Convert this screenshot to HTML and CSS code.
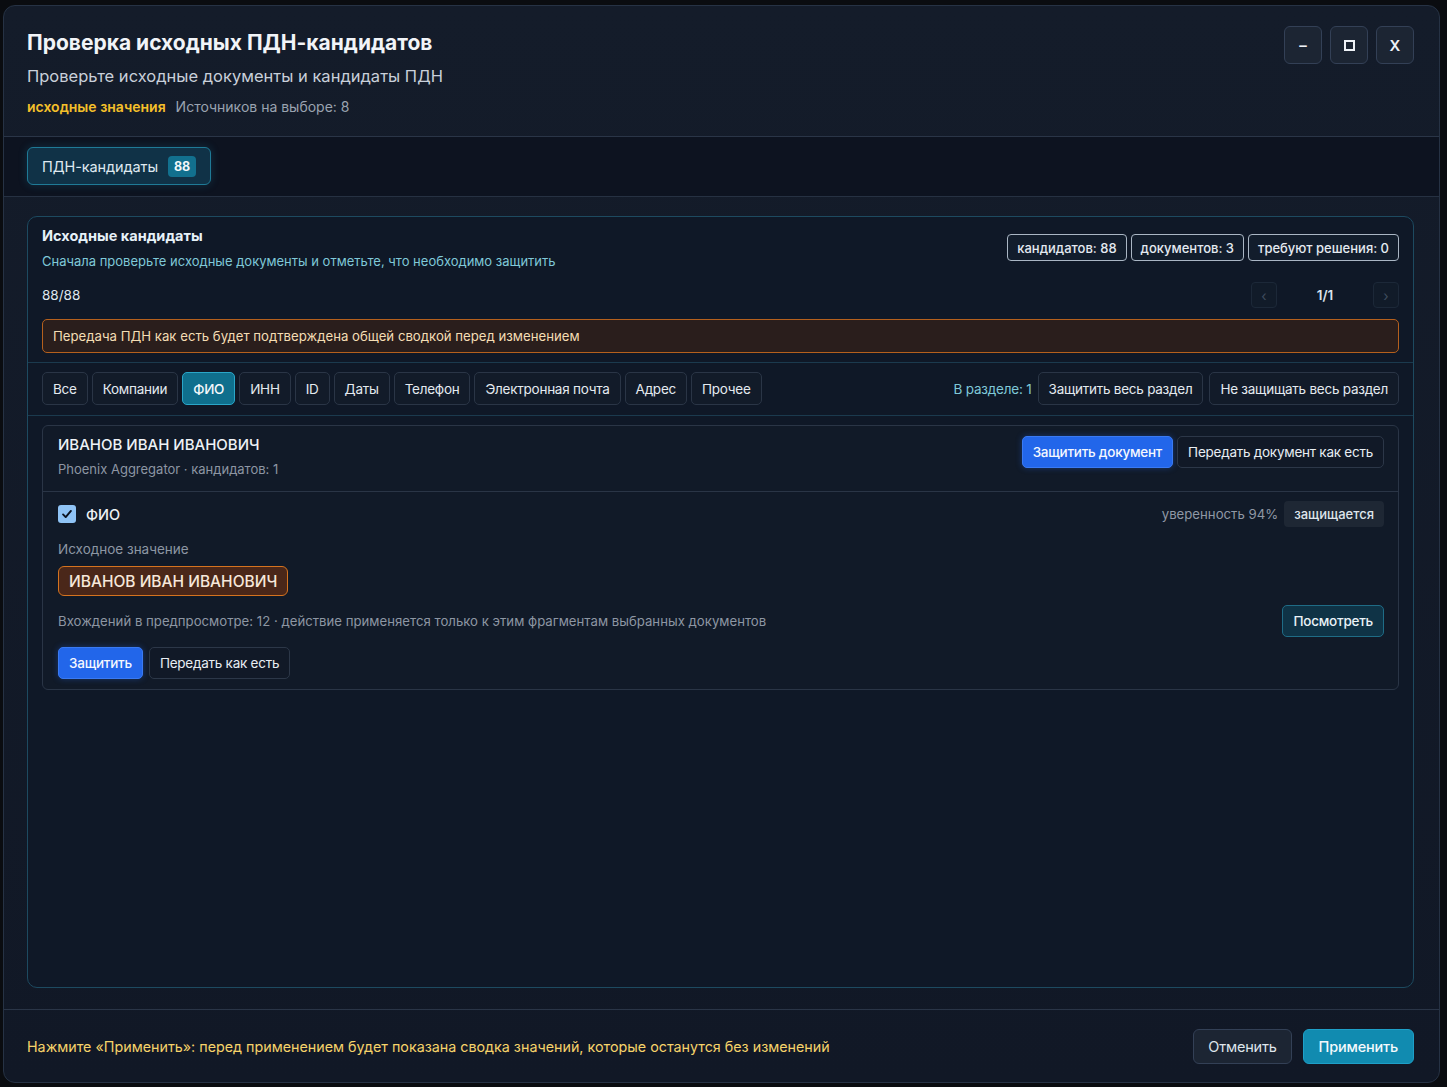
FILE: index.html
```html
<!DOCTYPE html>
<html lang="ru">
<head>
<meta charset="utf-8">
<title>Проверка исходных ПДН-кандидатов</title>
<link rel="stylesheet" href="styles.css">
</head>
<body>
<div class="modal">
  <header class="head">
    <div class="head-text">
      <h1 class="title">Проверка исходных ПДН-кандидатов</h1>
      <p class="subtitle">Проверьте исходные документы и кандидаты ПДН</p>
      <p class="meta"><span class="meta-accent">исходные значения</span><span class="meta-muted">Источников на выборе: 8</span></p>
    </div>
    <div class="win-ctrls">
      <button class="win-btn">–</button>
      <button class="win-btn"><span class="sq"></span></button>
      <button class="win-btn">X</button>
    </div>
  </header>

  <nav class="strip">
    <button class="strip-tab">ПДН-кандидаты <span class="count">88</span></button>
  </nav>

  <main class="body">
    <section class="panel">
      <div class="panel-top">
        <div class="panel-head">
          <div>
            <h2 class="panel-title">Исходные кандидаты</h2>
            <p class="panel-sub">Сначала проверьте исходные документы и отметьте, что необходимо защитить</p>
          </div>
          <div class="chips">
            <span class="chip">кандидатов: 88</span>
            <span class="chip">документов: 3</span>
            <span class="chip">требуют решения: 0</span>
          </div>
        </div>
        <div class="pager-row">
          <span class="ratio">88/88</span>
          <div class="pager">
            <button class="pg-btn">‹</button>
            <span class="pg-num">1/1</span>
            <button class="pg-btn">›</button>
          </div>
        </div>
        <div class="warn">Передача ПДН как есть будет подтверждена общей сводкой перед изменением</div>
      </div>

      <div class="filters">
        <div class="filter-tabs">
          <button class="ftab">Все</button>
          <button class="ftab">Компании</button>
          <button class="ftab active">ФИО</button>
          <button class="ftab">ИНН</button>
          <button class="ftab">ID</button>
          <button class="ftab">Даты</button>
          <button class="ftab">Телефон</button>
          <button class="ftab">Электронная почта</button>
          <button class="ftab">Адрес</button>
          <button class="ftab">Прочее</button>
        </div>
        <div class="filter-actions">
          <span class="in-section">В разделе: 1</span>
          <button class="ftab">Защитить весь раздел</button>
          <button class="ftab">Не защищать весь раздел</button>
        </div>
      </div>

      <div class="list">
        <article class="doc">
          <div class="doc-head">
            <div>
              <div class="doc-name">ИВАНОВ ИВАН ИВАНОВИЧ</div>
              <div class="doc-sub">Phoenix Aggregator · кандидатов: 1</div>
            </div>
            <div class="doc-actions">
              <button class="btn btn-blue">Защитить документ</button>
              <button class="btn btn-dark">Передать документ как есть</button>
            </div>
          </div>
          <div class="cand">
            <div class="cand-top">
              <label class="cand-label"><span class="check"><svg viewBox="0 0 16 16" width="14" height="14"><path d="M3.5 8.5l3 3 6-7" fill="none" stroke="#0b1220" stroke-width="2.2" stroke-linecap="round" stroke-linejoin="round"/></svg></span>ФИО</label>
              <div class="cand-status">
                <span class="conf">уверенность 94%</span>
                <span class="state">защищается</span>
              </div>
            </div>
            <div class="field-label">Исходное значение</div>
            <div class="value-pill">ИВАНОВ ИВАН ИВАНОВИЧ</div>
            <div class="occ-row">
              <span class="occ">Вхождений в предпросмотре: 12 · действие применяется только к этим фрагментам выбранных документов</span>
              <button class="btn btn-teal">Посмотреть</button>
            </div>
            <div class="cand-actions">
              <button class="btn btn-blue">Защитить</button>
              <button class="btn btn-dark">Передать как есть</button>
            </div>
          </div>
        </article>
      </div>
    </section>
  </main>

  <footer class="foot">
    <p class="foot-note">Нажмите «Применить»: перед применением будет показана сводка значений, которые останутся без изменений</p>
    <div class="foot-actions">
      <button class="fbtn fbtn-cancel">Отменить</button>
      <button class="fbtn fbtn-apply">Применить</button>
    </div>
  </footer>
</div>
</body>
</html>
```

FILE: styles.css
```css
* { box-sizing: border-box; }
html, body { height: 100%; }
body {
  margin: 0;
  background: #0a0c10;
  font-family: Inter, "Noto Sans", "Liberation Sans", sans-serif;
  color: #e6ebf2;
}
button { font-family: inherit; cursor: pointer; }
p, h1, h2 { margin: 0; }

.modal {
  margin: 5px 7px 4px 3px;
  height: 1078px;
  border: 1px solid #263244;
  border-radius: 12px;
  background: linear-gradient(180deg, #141c2a 0%, #111826 100%);
  display: flex;
  flex-direction: column;
  overflow: hidden;
}

/* header */
.head {
  display: flex;
  justify-content: space-between;
  align-items: flex-start;
  padding: 21px 25px 0 23px;
  height: 131px;
  border-bottom: 1px solid #2a3547;
}
.title { font-size: 21px; font-weight: 700; color: #f1f4f8; letter-spacing: 0; line-height: 32px; }
.subtitle { margin-top: 5px; font-size: 16.5px; color: #c9d0da; line-height: 24px; }
.meta { margin-top: 10px; font-size: 14px; line-height: 18px; display: flex; gap: 10px; }
.meta-accent { color: #f5c02a; font-weight: 600; }
.meta-muted { color: #9aa3b0; }
.win-ctrls { display: flex; gap: 8px; margin-top: -1px; }
.win-btn {
  width: 38px; height: 38px;
  border-radius: 6px;
  border: 1px solid #334056;
  background: #1c2533;
  color: #eef2f7;
  font-size: 15px;
  font-weight: 600;
  display: flex; align-items: center; justify-content: center;
  padding: 0;
}
.sq { width: 11px; height: 11px; border: 2px solid #eef2f7; display: block; }

/* strip */
.strip {
  height: 60px;
  background: #0d1320;
  border-bottom: 1px solid #263142;
  padding: 10px 24px 11px 23px;
  display: flex;
  align-items: center;
}
.strip-tab {
  height: 38px;
  padding: 0 14px;
  border-radius: 6px;
  border: 1px solid #1f7a96;
  background: #103247;
  color: #dfe9f0;
  font-size: 14.5px;
  letter-spacing: -0.1px;
  display: flex; align-items: center; gap: 10px;
  box-shadow: 0 0 8px rgba(30, 140, 180, 0.25);
}
.count {
  background: #12708e;
  color: #f2f7fa;
  font-size: 12.5px;
  font-weight: 700;
  border-radius: 4px;
  padding: 3px 6px;
}

/* body */
.body { flex: 1; padding: 19px 25px 21px 23px; display: flex; }
.panel {
  flex: 1;
  border: 1px solid #1d4a60;
  border-radius: 10px;
  background: #0f1827;
  display: flex;
  flex-direction: column;
}
.panel-top { padding: 10px 14px 9px 14px; border-bottom: 1px solid #1b3a4e; }
.panel-head { display: flex; justify-content: space-between; align-items: flex-start; }
.panel-title { font-size: 14.5px; font-weight: 700; color: #e6f1f8; line-height: 18px; }
.panel-sub { margin-top: 8px; font-size: 13px; color: #7fc8d8; line-height: 16px; }
.chips { display: flex; gap: 4px; margin-top: 7px; }
.chip {
  height: 27px;
  padding: 0 9px;
  border: 1px solid #aab6c4;
  border-radius: 4px;
  font-size: 13px;
  font-weight: 500;
  color: #e4eaf1;
  display: flex; align-items: center;
  background: #121d2c;
}
.pager-row { display: flex; justify-content: space-between; align-items: center; margin-top: 13px; height: 26px; }
.ratio { font-size: 13.5px; color: #dfe6ee; }
.pager { display: flex; align-items: center; }
.pg-btn {
  width: 26px; height: 26px;
  border-radius: 4px;
  border: 1px solid #1c2838;
  background: #111b29;
  color: #3f4c5e;
  font-size: 14px;
  padding: 0;
}
.pg-num { width: 96px; text-align: center; font-size: 13.5px; font-weight: 600; color: #dbe3ec; }
.warn {
  margin-top: 11px;
  height: 34px;
  border: 1px solid #b5601d;
  border-radius: 5px;
  background: #2a1e1c;
  color: #f4ddb4;
  font-size: 13.2px;
  display: flex; align-items: center;
  padding: 0 10px;
}

.filters {
  display: flex; justify-content: space-between; align-items: center;
  padding: 9px 14px 10px 14px;
  border-bottom: 1px solid #1b3a4e;
}
.filter-tabs { display: flex; gap: 4px; align-items: center; }
.filter-actions { display: flex; gap: 6px; align-items: center; }
.ftab {
  height: 33px;
  padding: 0 10px;
  border-radius: 5px;
  border: 1px solid #2a3546;
  background: #121b29;
  color: #e4eaf0;
  font-size: 13.5px;
  letter-spacing: -0.25px;
}
.ftab.active { background: #0f6f8d; border-color: #2aa6c8; color: #f3f8fb; font-weight: 500; }
.in-section { color: #7fc8d8; font-size: 13.5px; letter-spacing: -0.2px; }

.list { padding: 9px 14px; }
.doc { border: 1px solid #2a3546; border-radius: 6px; background: #111a28; }
.doc-head {
  display: flex; justify-content: space-between; align-items: flex-start;
  padding: 9px 14px 13px 15px;
  border-bottom: 1px solid #2a3546;
}
.doc-name { font-size: 15px; color: #eef2f6; line-height: 20px; font-weight: 500; }
.doc-sub { margin-top: 6px; font-size: 13px; color: #8d96a3; line-height: 17px; }
.doc-actions { display: flex; gap: 4px; margin-top: 1px; }
.btn {
  height: 32px;
  padding: 0 10px;
  border-radius: 5px;
  font-size: 13.5px;
  letter-spacing: -0.25px;
  border: 1px solid #2c3748;
  color: #e8edf3;
  background: #111927;
}
.btn-blue { background: #2266ea; border-color: #3a7af2; color: #f5f8ff; font-weight: 500; box-shadow: 0 0 6px rgba(40,110,240,0.35); }
.btn-dark { background: #111927; }
.btn-teal { background: #0f3346; border-color: #1f6c86; color: #e9f2f7; font-weight: 500; }

.cand { padding: 9px 14px 10px 15px; }
.cand-top { display: flex; justify-content: space-between; align-items: center; }
.cand-label { display: flex; align-items: center; gap: 10px; font-size: 14.5px; font-weight: 500; color: #eef2f6; }
.check {
  width: 18px; height: 18px; border-radius: 3px;
  background: #8fc3f5;
  display: flex; align-items: center; justify-content: center;
}
.cand-status { display: flex; align-items: center; gap: 6px; }
.conf { font-size: 13.2px; color: #8f98a5; }
.state {
  height: 26px; padding: 0 10px;
  border-radius: 4px;
  background: #1e2734;
  color: #dfe5ec;
  font-size: 13px; font-weight: 500;
  display: flex; align-items: center;
}
.field-label { margin-top: 13px; font-size: 13.5px; color: #8d96a3; line-height: 18px; }
.value-pill {
  margin-top: 8px;
  display: inline-flex; align-items: center;
  height: 30px;
  padding: 0 10px;
  border: 1px solid #d5731f;
  border-radius: 6px;
  background: #4a2719;
  color: #f6e7da;
  font-size: 15.5px;
  font-weight: 500;
}
.occ-row { display: flex; justify-content: space-between; align-items: center; margin-top: 9px; }
.occ { font-size: 13.2px; color: #8d96a3; }
.cand-actions { display: flex; gap: 6px; margin-top: 10px; }

.foot {
  height: 73px;
  border-top: 1px solid #2a3547;
  display: flex; justify-content: space-between; align-items: center;
  padding: 0 25px 0 23px;
}
.foot-note { color: #f6d36a; font-size: 14.3px; }
.foot-actions { display: flex; gap: 11px; }
.fbtn {
  height: 35px;
  padding: 0 14px;
  border-radius: 6px;
  font-size: 14.5px;
  letter-spacing: -0.2px;
}
.fbtn-cancel { background: #1c2533; border: 1px solid #334056; color: #dfe5ec; }
.fbtn-apply { background: #118bb0; border: 1px solid #1ea0c8; color: #f4f9fc; font-weight: 500; padding: 0 15px; }
```
